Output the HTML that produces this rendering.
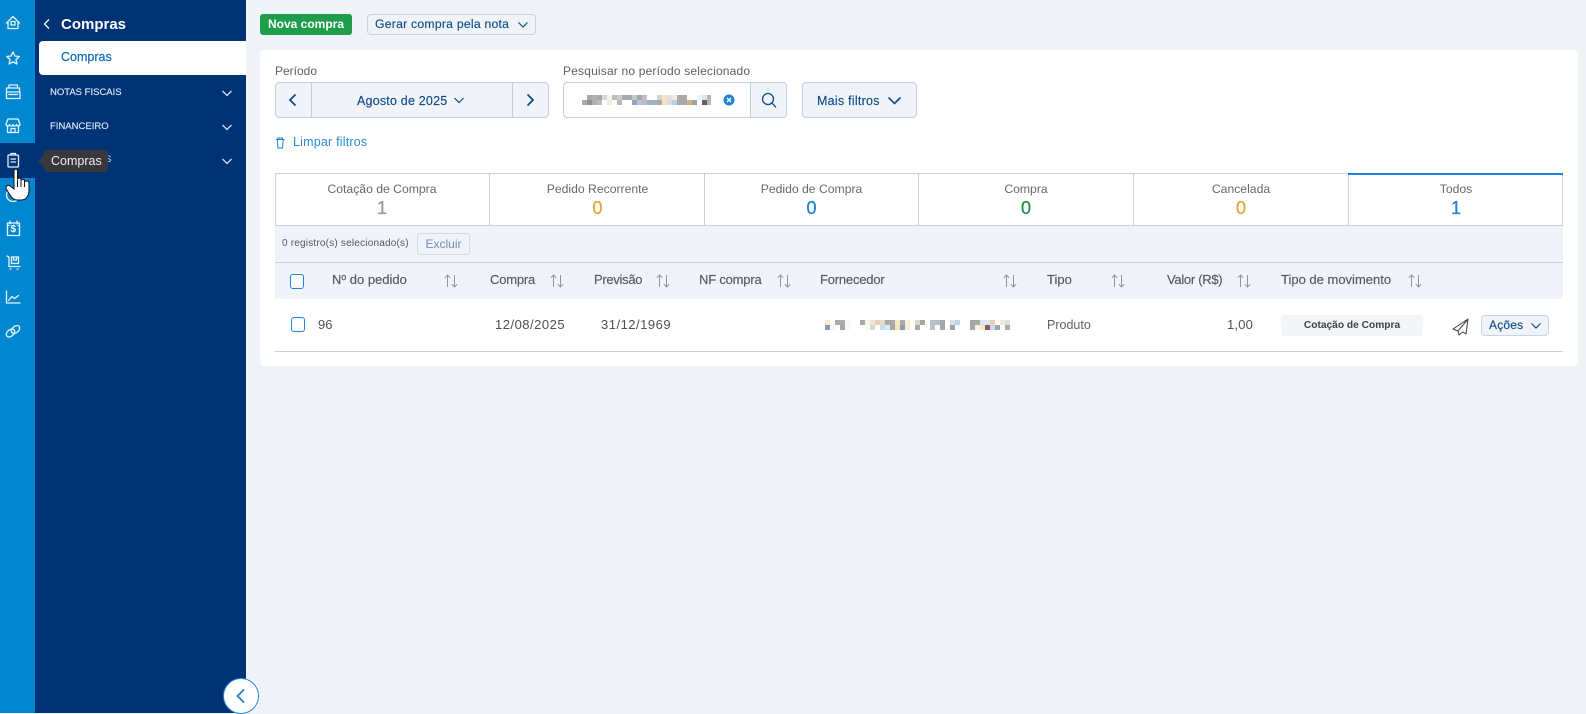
<!DOCTYPE html>
<html lang="pt-BR"><head><meta charset="utf-8"><title>Compras</title>
<style>
*{box-sizing:border-box}
html,body{margin:0;padding:0;width:1586px;height:713px;overflow:hidden;background:#f0f3f8;font-family:"Liberation Sans",sans-serif;color:#5a5f66}
.a{position:absolute;white-space:nowrap}
.btn{position:absolute;background:#f0f3f8;border:1px solid #c8d3e0;border-radius:4px}
.t{position:absolute;white-space:nowrap;font-size:13px;line-height:16px}
.tab{position:absolute;top:173px;height:53px;text-align:center;font-size:12.200px;color:#66696e;padding-top:8px;line-height:16px}
.tab b{display:block;font-size:18px;line-height:20px;font-weight:400;margin-top:1px;-webkit-text-stroke:.3px currentColor}
.h{position:absolute;top:272px;font-size:13px;line-height:16px;color:#55595f;white-space:nowrap;-webkit-text-stroke:.15px #55595f}
.r{position:absolute;top:317px;font-size:13px;line-height:16px;color:#4d5156;white-space:nowrap}
svg{position:absolute;overflow:visible}
</style></head><body>

<!-- rail -->
<div class="a" style="left:0;top:0;width:35px;height:713px;background:#0087cf"></div>
<div class="a" style="left:0;top:143px;width:35px;height:35px;background:#003375"></div>
<!-- sidebar -->
<div class="a" style="left:35px;top:0;width:211px;height:713px;background:#003375"></div>
<div class="a" style="left:39px;top:41px;width:207px;height:34px;background:#fff;border-radius:4px 0 0 4px"></div>
<svg style="left:43px;top:18px" width="10" height="12" fill="none" stroke="#fff" stroke-width="1.300"><path d="M6 1.500L1.500 6L6 10.500"/></svg>
<div class="t" style="left:61px;top:16px;font-size:15px;line-height:18px;font-weight:700;color:#fff">Compras</div>
<div class="t" style="left:61px;top:49px;font-size:12.500px;color:#0a6ab8;-webkit-text-stroke:.2px #0a6ab8">Compras</div>
<div class="t" style="left:50px;top:86px;font-size:9.500px;line-height:14px;color:#d8e8fa;-webkit-text-stroke:.15px #d8e8fa">NOTAS FISCAIS</div>
<div class="t" style="left:50px;top:120px;font-size:9.500px;line-height:14px;color:#d8e8fa;-webkit-text-stroke:.15px #d8e8fa">FINANCEIRO</div>
<div class="t" style="left:105px;top:153px;font-size:9.500px;line-height:14px;color:#d8e8fa">S</div>
<svg style="left:221px;top:88px" width="12" height="80" fill="none" stroke="#cfe2f6" stroke-width="1.300"><path d="M1.500 3L6 7.500L10.500 3M1.500 37L6 41.500L10.500 37M1.500 71L6 75.500L10.500 71"/></svg>

<!-- rail icons -->
<svg style="left:0;top:0" width="35" height="350" fill="none" stroke="#e8f4fc" stroke-width="1.300" stroke-linejoin="round" stroke-linecap="round">
<path d="M6.500 23L13 16.500L19.500 23M8 21.500V28.500H18V21.500"/><rect x="11" y="21.500" width="4" height="3.500"/>
<path d="M13 52L14.900 56L19.300 56.500L16 59.500L16.900 64L13 61.800L9.100 64L10 59.500L6.700 56.500L11.100 56Z"/>
<path d="M9 88V85H17.500V88M6.500 92V88H19.500V92M6.500 92H20V98.500H6.500ZM9 94.500H17.500" />
<path d="M8 119H18L20 124C20 126.500 16.500 126.500 16.500 124.500C16.500 126.500 13 126.500 13 124.500C13 126.500 9.500 126.500 9.500 124.500C9.500 126.500 6 126.500 6 124ZM7.500 126.500V132.500H18.500V126.500M11 132.500V128.500H15V132.500"/>
<rect x="8" y="155" width="10.500" height="12" rx="1"/><path d="M11 155V153.500H15.500V155M11 159H15.500M11 162H15.500"/>
<circle cx="13" cy="195" r="6.500"/>
<rect x="7.500" y="223" width="12" height="12.500"/><path d="M7.500 225.500H9M18 225.500H19.500M10 221V224M17 221V224" />
<path d="M7 256L9 257V266.500H20M10 269H11M17 269H18M11.500 257H18.500V263.500H11.500ZM13.500 257V260H16.500V257"/>
<path d="M6.500 291V303H20M8.500 300.500L12 296.500L14.500 298.500L18.500 295.500"/>
<ellipse cx="10.500" cy="333" rx="4.800" ry="3.200" transform="rotate(-42 10.500 333)"/><ellipse cx="15.500" cy="329.500" rx="4.800" ry="3.200" transform="rotate(-42 15.500 329.500)"/>
</svg>
<div class="t" style="left:10.500px;top:223.500px;font-size:10px;line-height:12px;font-weight:700;color:#fff">$</div>

<!-- tooltip -->
<svg style="left:38px;top:155px" width="7" height="12"><path d="M6 0V12L0 6Z" fill="#38393d"/></svg>
<div class="a" style="left:44px;top:150px;width:64px;height:22px;background:#38393d;border-radius:4px;color:#eee;font-size:12.500px;line-height:22px;padding-left:7px">Compras</div>

<!-- hand cursor -->
<svg style="left:0;top:150px" width="35" height="55"><path transform="translate(0,-150)" d="M14 171C14 168.500 17.500 168.500 17.500 171V179.500C18 177.500 21 177.500 21 179.500V180.500C21.500 179 24.500 179 24.500 181V182C25 180.500 29 180.500 29 183V190C29 196 26 200 21 200H17C13 200 11 197 6 188.500C5.500 186 8 184.500 10 186L14 189Z" fill="#fff" stroke="#111" stroke-width="1"/><path transform="translate(0,-150)" d="M17.500 180V187M21 180.500V187M24.500 182V187" stroke="#111" fill="none"/></svg>

<!-- collapse -->
<div class="a" style="left:223px;top:678px;width:36px;height:36px;border-radius:50%;background:#fff;border:1px solid #1f8ad6"></div>
<svg style="left:235px;top:688px" width="12" height="16" fill="none" stroke="#1a80c8" stroke-width="1.800"><path d="M9 1.500L2.500 8L9 14.500"/></svg>

<!-- top buttons -->
<div class="a" style="left:260px;top:14px;width:92px;height:21px;background:#1e9e4a;border-radius:3px;color:#fff;font-size:12px;line-height:21px;text-align:center;font-weight:700">Nova compra</div>
<div class="btn" style="left:367px;top:14px;width:169px;height:21px"></div>
<div class="t" style="left:375px;top:16px;font-size:12.200px;color:#0f4c8a;letter-spacing:.25px;-webkit-text-stroke:.15px #0f4c8a">Gerar compra pela nota</div>
<svg style="left:517px;top:21px" width="12" height="8" fill="none" stroke="#0f4c8a" stroke-width="1.200"><path d="M1.500 1.500L6 6L10.500 1.500"/></svg>

<!-- card -->
<div class="a" style="left:260px;top:50px;width:1318px;height:316px;background:#fff;border-radius:4px"></div>
<div class="t" style="left:275px;top:63px;color:#5a5f66;font-size:12px">Período</div>
<div class="t" style="left:563px;top:63px;color:#5a5f66;font-size:12px;letter-spacing:.18px">Pesquisar no período selecionado</div>

<div class="btn" style="left:275px;top:82px;width:274px;height:36px;border-color:#c3cfdd"></div>
<div class="a" style="left:311px;top:82px;width:1px;height:36px;background:#c3cfdd"></div>
<div class="a" style="left:512px;top:82px;width:1px;height:36px;background:#c3cfdd"></div>
<svg style="left:287px;top:93px" width="12" height="14" fill="none" stroke="#0f4c8a" stroke-width="1.800"><path d="M8.500 1.500L3 7L8.500 12.500"/></svg>
<svg style="left:524px;top:93px" width="12" height="14" fill="none" stroke="#0f4c8a" stroke-width="1.800"><path d="M3.500 1.500L9 7L3.500 12.500"/></svg>
<div class="t" style="left:357px;top:93px;font-size:12.500px;color:#0f4c8a;letter-spacing:.2px;-webkit-text-stroke:.15px #0f4c8a">Agosto de 2025</div>
<svg style="left:453px;top:96px" width="12" height="9" fill="none" stroke="#0f4c8a" stroke-width="1.200"><path d="M1.500 2L6 6.500L10.500 2"/></svg>

<div class="a" style="left:563px;top:82px;width:224px;height:36px;background:#fff;border:1px solid #c3cfdd;border-radius:4px"></div>
<div class="a" style="left:750px;top:83px;width:36px;height:34px;background:#f0f3f8;border-left:1px solid #c3cfdd;border-radius:0 3px 3px 0"></div>
<svg style="left:582px;top:95px" width="136" height="10" shape-rendering="crispEdges">
<g fill="#a9a9a8"><rect x="0" y="5" width="5" height="5"/><rect x="5" y="0" width="5" height="5"/><rect x="5" y="5" width="5" height="5" fill="#909090"/><rect x="10" y="0" width="5" height="10" fill="#b0b0b0"/><rect x="15" y="0" width="5" height="5"/><rect x="15" y="5" width="5" height="5" fill="#bdbdbd"/><rect x="20" y="0" width="5" height="5" fill="#d9d9d0"/><rect x="25" y="0" width="5" height="5" fill="#fbf5e8"/><rect x="25" y="5" width="5" height="5" fill="#f7ecd8"/><rect x="30" y="0" width="5" height="5" fill="#b9bdc1"/><rect x="35" y="0" width="5" height="5" fill="#c9cdd0"/><rect x="35" y="5" width="5" height="5" fill="#b8b8b8"/><rect x="40" y="0" width="10" height="5"/><rect x="50" y="0" width="5" height="5" fill="#c0cad2"/><rect x="50" y="5" width="5" height="5" fill="#9ba3b3"/><rect x="55" y="0" width="5" height="5" fill="#a9a9a8"/><rect x="55" y="5" width="5" height="5" fill="#aec7e0"/><rect x="60" y="0" width="5" height="5" fill="#c0c0c0"/><rect x="60" y="5" width="5" height="5" fill="#bdbdbd"/><rect x="65" y="5" width="10" height="5" fill="#9db3cc"/><rect x="75" y="0" width="5" height="5" fill="#ccd6d8"/><rect x="75" y="5" width="5" height="5" fill="#a9a9a8"/><rect x="80" y="0" width="5" height="10" fill="#f7e3c2"/><rect x="85" y="0" width="5" height="5" fill="#e4e0d5"/><rect x="85" y="5" width="5" height="5" fill="#d6dde0"/><rect x="90" y="0" width="5" height="5" fill="#f3ecd8"/><rect x="90" y="5" width="5" height="5" fill="#b7cfe6"/><rect x="95" y="0" width="10" height="10" fill="#a9a9a8"/><rect x="105" y="5" width="5" height="5" fill="#d6ae7f"/><rect x="110" y="5" width="5" height="5" fill="#9ba3b3"/><rect x="115" y="0" width="5" height="5" fill="#e9f6fa"/><rect x="120" y="0" width="5" height="5" fill="#e0e6ea"/><rect x="120" y="5" width="5" height="5" fill="#6e5a66"/><rect x="125" y="0" width="4" height="10" fill="#b9b9b0"/></g></svg>
<svg style="left:723px;top:94px" width="12" height="12"><circle cx="6" cy="6" r="5.500" fill="#1f82d6"/><path d="M4 4L8 8M8 4L4 8" stroke="#fff" stroke-width="1.400"/></svg>
<svg style="left:761px;top:92px" width="16" height="17" fill="none" stroke="#0f4c8a" stroke-width="1.300"><circle cx="7" cy="7" r="5.500"/><path d="M11 11L15 15.500"/></svg>

<div class="btn" style="left:802px;top:82px;width:115px;height:36px;border-color:#c3cfdd"></div>
<div class="t" style="left:817px;top:93px;font-size:12.500px;color:#0f4c8a;letter-spacing:.25px;-webkit-text-stroke:.15px #0f4c8a">Mais filtros</div>
<svg style="left:887px;top:96px" width="15" height="10" fill="none" stroke="#0f4c8a" stroke-width="1.600"><path d="M1.500 1.500L7.500 7.500L13.500 1.500"/></svg>

<svg style="left:275px;top:137px" width="11" height="12" fill="none" stroke="#1f82d6" stroke-width="1"><path d="M1 2.500H9.500M3 2.500V1H7.500V2.500M2.300 2.500L3 11H7.500L8.200 2.500"/></svg>
<div class="t" style="left:293px;top:134px;font-size:12.500px;color:#2a8ad6;letter-spacing:.2px">Limpar filtros</div>

<!-- tabs -->
<div class="a" style="left:275px;top:173px;width:1288px;height:53px;border:1px solid #c6d1de"></div>
<div class="tab" style="left:275px;width:214px">Cotação de Compra<b style="color:#8e9aa0">1</b></div>
<div class="tab" style="left:490px;width:215px">Pedido Recorrente<b style="color:#e2a63b">0</b></div>
<div class="tab" style="left:705px;width:213px">Pedido de Compra<b style="color:#1f82d6">0</b></div>
<div class="tab" style="left:919px;width:214px">Compra<b style="color:#1e9345">0</b></div>
<div class="tab" style="left:1134px;width:214px">Cancelada<b style="color:#e2a63b">0</b></div>
<div class="tab" style="left:1349px;width:214px">Todos<b style="color:#1f82d6">1</b></div>
<div class="a" style="left:489px;top:173px;width:1px;height:53px;background:#c6d1de"></div>
<div class="a" style="left:704px;top:173px;width:1px;height:53px;background:#c6d1de"></div>
<div class="a" style="left:918px;top:173px;width:1px;height:53px;background:#c6d1de"></div>
<div class="a" style="left:1133px;top:173px;width:1px;height:53px;background:#c6d1de"></div>
<div class="a" style="left:1348px;top:173px;width:1px;height:53px;background:#c6d1de"></div>
<div class="a" style="left:1348px;top:173px;width:215px;height:2px;background:#1f82d6"></div>

<!-- toolbar + head -->
<div class="a" style="left:275px;top:226px;width:1288px;height:73px;background:#f0f3f8"></div>
<div class="a" style="left:275px;top:262px;width:1288px;height:1px;background:#c6d1de"></div>
<div class="t" style="left:282px;top:236px;font-size:10px;color:#55595f;letter-spacing:.2px">0 registro(s) selecionado(s)</div>
<div class="a" style="left:417px;top:233px;width:53px;height:22px;border:1px solid #d3dbe6;border-radius:3px;color:#6f8fb5;font-size:12px;line-height:20px;text-align:center">Excluir</div>

<div class="a" style="left:290px;top:274px;width:14px;height:15px;border:1.300px solid #1f82d6;border-radius:3px;background:#fff"></div>
<div class="h" style="left:332px">Nº do pedido</div>
<div class="h" style="left:490px;letter-spacing:-.2px">Compra</div>
<div class="h" style="left:594px;letter-spacing:-.3px">Previsão</div>
<div class="h" style="left:699px;letter-spacing:-.2px">NF compra</div>
<div class="h" style="left:820px;letter-spacing:-.2px">Fornecedor</div>
<div class="h" style="left:1047px">Tipo</div>
<div class="h" style="left:1167px;letter-spacing:-.3px">Valor (R$)</div>
<div class="h" style="left:1281px">Tipo de movimento</div>
<svg style="left:0;top:273px" width="1586" height="16" fill="none" stroke="#8f969d" stroke-width="1"><defs><path id="s" d="M3.500 14V2M.8 4.800L3.500 2L6.200 4.800M10.500 2V14M7.800 11.200L10.500 14L13.200 11.200"/></defs><use href="#s" x="444"/><use href="#s" x="550"/><use href="#s" x="656"/><use href="#s" x="777"/><use href="#s" x="1003"/><use href="#s" x="1111"/><use href="#s" x="1237"/><use href="#s" x="1408"/></svg>

<!-- row -->
<div class="a" style="left:291px;top:317px;width:14px;height:15px;border:1.300px solid #1f82d6;border-radius:3px"></div>
<div class="r" style="left:318px">96</div>
<div class="r" style="left:495px;letter-spacing:.5px">12/08/2025</div>
<div class="r" style="left:601px;letter-spacing:.5px">31/12/1969</div>
<svg style="left:825px;top:320px" width="190" height="10" shape-rendering="crispEdges">
<rect x="0" y="0" width="5" height="5" fill="#f7e8d4"/><rect x="0" y="5" width="5" height="5" fill="#8d99ad"/><rect x="5" y="5" width="5" height="5" fill="#fbf7e8"/><rect x="10" y="0" width="10" height="5" fill="#a9adb0"/><rect x="15" y="5" width="5" height="5" fill="#a5a5a5"/><rect x="20" y="0" width="5" height="10" fill="#f0fafd"/><rect x="35" y="0" width="5" height="5" fill="#a9a9a8"/><rect x="40" y="0" width="5" height="5" fill="#f8f3df"/><rect x="40" y="5" width="5" height="5" fill="#fbfbf0"/><rect x="45" y="0" width="5" height="5" fill="#e8e6da"/><rect x="45" y="5" width="5" height="5" fill="#d5d8d5"/><rect x="50" y="0" width="5" height="5" fill="#e6cdb8"/><rect x="55" y="0" width="5" height="5" fill="#ead9c3"/><rect x="55" y="5" width="5" height="5" fill="#c3e0f2"/><rect x="60" y="0" width="10" height="5" fill="#a9a9a8"/><rect x="60" y="5" width="5" height="5" fill="#d5eff8"/><rect x="65" y="5" width="5" height="5" fill="#a5a5a5"/><rect x="70" y="0" width="5" height="5" fill="#f3e7c5"/><rect x="70" y="5" width="5" height="5" fill="#f7e3b5"/><rect x="75" y="0" width="5" height="5" fill="#aaa"/><rect x="75" y="5" width="5" height="5" fill="#8b9bb8"/><rect x="80" y="0" width="5" height="10" fill="#f6eed5"/><rect x="90" y="0" width="5" height="5" fill="#d9d9c8"/><rect x="90" y="5" width="5" height="5" fill="#a9a9a8"/><rect x="95" y="0" width="5" height="5" fill="#a5a5a5"/><rect x="105" y="0" width="5" height="5" fill="#b8c0c5"/><rect x="105" y="5" width="5" height="5" fill="#c5bfc2"/><rect x="110" y="0" width="5" height="5" fill="#b5bdc2"/><rect x="115" y="0" width="5" height="10" fill="#a5a8aa"/><rect x="125" y="0" width="5" height="5" fill="#d6e2ea"/><rect x="125" y="5" width="5" height="5" fill="#9aa0a8"/><rect x="130" y="0" width="5" height="5" fill="#c0d3e4"/><rect x="145" y="0" width="5" height="10" fill="#a5a8aa"/><rect x="150" y="0" width="5" height="5" fill="#a9a9a8"/><rect x="150" y="5" width="5" height="5" fill="#f9f3de"/><rect x="155" y="0" width="5" height="5" fill="#dbe6f0"/><rect x="155" y="5" width="5" height="5" fill="#f6e9c8"/><rect x="160" y="0" width="5" height="5" fill="#e6e6ee"/><rect x="160" y="5" width="5" height="5" fill="#6e5a72"/><rect x="165" y="0" width="5" height="5" fill="#e8cdb8"/></svg>
<svg style="left:985px;top:320px" width="30" height="10" shape-rendering="crispEdges"><rect x="0" y="5" width="5" height="5" fill="#8c5a5a"/><rect x="0" y="0" width="5" height="5" fill="#dde6f2"/><rect x="5" y="5" width="5" height="5" fill="#c3e0f2"/><rect x="10" y="5" width="5" height="5" fill="#a5a5a5"/><rect x="15" y="0" width="5" height="5" fill="#f5e8d2"/><rect x="20" y="0" width="5" height="5" fill="#dde3ea"/><rect x="20" y="5" width="5" height="5" fill="#a9adb0"/></svg>
<div class="r" style="left:1047px;color:#5f6368;font-size:12.500px">Produto</div>
<div class="r" style="left:1227px;letter-spacing:.2px">1,00</div>
<div class="a" style="left:1281px;top:315px;width:142px;height:21px;background:#f2f4f5;border-radius:3px;font-size:10.200px;font-weight:700;line-height:21px;text-align:center;color:#3f4347">Cotação de Compra</div>
<svg style="left:1451px;top:318px" width="20" height="18" fill="none" stroke="#3a3c40" stroke-width="1" stroke-linejoin="round"><path d="M17 1L2 11L7 13L8 17L12 14L15 16ZM17 1L7 13"/></svg>
<div class="btn" style="left:1481px;top:315px;width:68px;height:21px"></div>
<div class="t" style="left:1489px;top:317px;color:#0f4c8a;font-size:12px;letter-spacing:.2px;-webkit-text-stroke:.15px #0f4c8a">Ações</div>
<svg style="left:1529.500px;top:321.500px" width="12" height="9" fill="none" stroke="#0f4c8a" stroke-width="1.200"><path d="M1.500 1.500L6 6L10.500 1.500"/></svg>
<div class="a" style="left:275px;top:351px;width:1288px;height:1px;background:#c6d1de"></div>
</body></html>
